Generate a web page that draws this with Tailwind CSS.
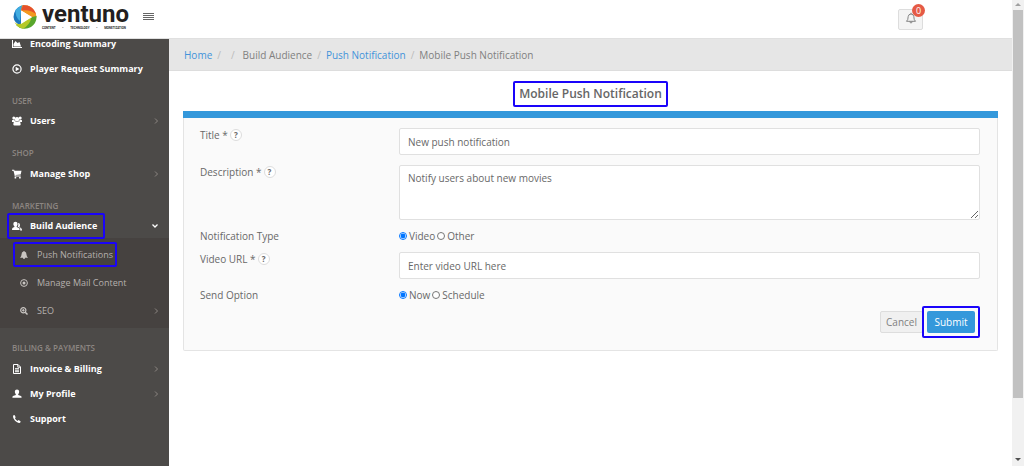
<!DOCTYPE html>
<html lang="en">
<head>
<meta charset="utf-8">
<meta name="viewport" content="width=device-width, initial-scale=1">
<title>Mobile Push Notification</title>
<script src="https://cdn.jsdelivr.net/npm/@tailwindcss/browser@4"></script>
</head>
<body class="flex h-screen overflow-hidden bg-white font-['Open_Sans','Noto_Sans',sans-serif] text-[10px] leading-4 text-[#686868]">
<div class="flex min-w-0 flex-1 flex-col">
  <header class="flex h-[39px] shrink-0 items-center border-b border-[#e0e0e0] bg-white pl-[13px]">
    <a href="#" aria-label="Ventuno" class="flex items-center gap-[5px] pb-[5px]">
      <svg class="size-6" viewBox="0 0 24 24">
        <path fill="#1c78bd" d="M8 5.500V20.500Q1 18 .5 12 .8 4 8 .8L12 0Q9 2 8 5.500Z"/>
        <path fill="#41ace0" d="M2.500 5Q5 1.500 9 .5L8 6 7 16Q2 12 2.500 5Z"/>
        <path fill="#f39a20" d="M9 .5Q16-1 20 4 23 7 23.500 12 21 15.500 18.500 12L8 5.500Z"/>
        <path fill="#e5512c" d="M10 .3Q17-.5 21 5L23 9Q17 4 8 5.500Z"/>
        <path fill="#58a62c" d="M23.500 11Q24 18 18 22 13 25 7 23L3 20Q12 20 19 12Z"/>
        <path fill="#b5c928" d="M1.500 17Q4 20 8 18.500L18.500 12Q17 20 10 23.700 4 22.500 1.500 17Z"/>
        <path fill="#fff" d="M8 5.500 19 12 8 19Z"/>
      </svg>
      <span class="flex w-[84px] flex-col font-['Roboto',sans-serif] text-[#231f20]">
        <span class="text-[24px] leading-[23px] font-bold">ventuno</span>
        <span class="flex justify-between text-[3px] leading-[4px] font-bold"><span>CONTENT</span><span>•</span><span>TECHNOLOGY</span><span>•</span><span>MONETIZATION</span></span>
      </span>
    </a>
    <button type="button" aria-label="Toggle menu" class="ml-[17px] flex w-[11px] flex-col gap-px pb-[5px]">
      <span class="h-px w-full bg-[#666]"></span><span class="h-px w-full bg-[#666]"></span><span class="h-px w-full bg-[#666]"></span><span class="h-px w-full bg-[#666]"></span>
    </button>
    <button type="button" aria-label="Notifications, 0 new" class="relative mr-[89px] ml-auto flex h-[21px] w-[25px] items-center justify-center rounded-xs border border-[#ddd] bg-[#f4f4f4]">
      <svg class="mb-[2px] size-3" viewBox="0 0 12 12" fill="none" stroke="#777" stroke-width=".9"><path d="M1.500 9.300Q3.200 8 3.200 4.500 3.400 2.200 6 2 8.600 2.200 8.800 4.500 8.800 8 10.500 9.300ZM6 2V.8M4.900 9.500Q5 11 6 11 7 11 7.100 9.500"/></svg>
      <span class="absolute -top-[6px] -right-[3px] size-[13px] rounded-full bg-[#e55a45] text-center text-[9px] leading-[13px] text-white">0</span>
    </button>
  </header>
  <div class="flex min-h-0 flex-1">
    <nav class="w-[169px] shrink-0 overflow-hidden bg-[#4c4a48] text-[9px] text-white">
      <div class="-mt-2 font-bold">
        <a href="#" class="flex h-[25px] items-center gap-2 pl-3">
          <svg class="size-[10px]" viewBox="0 0 10 10" fill="#fff"><path d="M0 1H1V8H10V9H0ZM1.500 7.500V5L3.500 2 5.500 4 7.500 3 9 7.500Z"/></svg>Encoding Summary</a>
        <a href="#" class="flex h-[25px] items-center gap-2 pl-3">
          <svg class="size-[10px]" viewBox="0 0 10 10"><circle cx="5" cy="5" r="4.100" fill="none" stroke="#fff" stroke-width="1.200"/><path fill="#fff" d="M3.700 2.700 7.400 5 3.700 7.300Z"/></svg>Player Request Summary</a>
        <h2 class="h-[27px] pt-3 pl-3 text-[8px] leading-[15px] font-semibold text-[#8c8682]">USER</h2>
        <a href="#" class="flex h-[25px] items-center gap-2 pr-[10px] pl-3">
          <svg class="size-[10px]" viewBox="0 0 10 10" fill="#fff"><circle cx="1.800" cy="2" r="1.500"/><circle cx="8.200" cy="2" r="1.500"/><circle cx="5" cy="3.300" r="2.200"/><path d="M0 6V4.300Q1 3.300 2.300 3.800L3 5.300 2 6ZM10 6V4.300Q9 3.300 7.700 3.800L7 5.300 8 6ZM1.300 8.500Q1.400 5.300 3.200 5.200L5 6 6.800 5.200Q8.600 5.300 8.700 8.500 8.500 9.500 7.500 9.500H2.500Q1.500 9.500 1.300 8.500Z"/></svg>
          <span class="flex-1">Users</span>
          <svg class="h-2 w-[5px]" viewBox="0 0 5 8" fill="none" stroke="#8c8682"><path d="M1 1.500 3.500 4 1 6.500"/></svg></a>
        <h2 class="h-7 pt-3 pl-3 text-[8px] leading-[15px] font-semibold text-[#8c8682]">SHOP</h2>
        <a href="#" class="flex h-[25px] items-center gap-2 pr-[10px] pl-3">
          <svg class="size-[10px]" viewBox="0 0 10 10" fill="#fff"><path d="M0 .8H2.200L2.500 1.800H9.500L8.700 5.500 3.500 6V6.600H8.700V7.500H2.600V6.200L1.500 1.700H0Z"/><circle cx="3.400" cy="8.700" r=".9"/><circle cx="7.900" cy="8.700" r=".9"/></svg>
          <span class="flex-1">Manage Shop</span>
          <svg class="h-2 w-[5px]" viewBox="0 0 5 8" fill="none" stroke="#8c8682"><path d="M1 1.500 3.500 4 1 6.500"/></svg></a>
        <h2 class="h-[27px] pt-3 pl-3 text-[8px] leading-[15px] font-semibold text-[#8c8682]">MARKETING</h2>
        <a href="#" class="relative flex h-[25px] items-center gap-2 pr-[10px] pl-3">
          <span class="absolute top-0 left-[7px] h-[26px] w-[98px] rounded-xs border-2 border-[#1a04fa]"></span>
          <svg class="size-[10px]" viewBox="0 0 10 10" fill="#fff"><path d="M1.300 3Q1.300.8 3.500.8 5.600.8 5.600 3 5.600 4.500 4.700 5.300V6L7.500 7.500V9H0Q0 7 .8 6.700L2.400 6V5.300Q1.300 4.500 1.300 3ZM6 2Q8 1.800 8 4 8 5.500 7.300 6L9 7Q10 7.500 10 9.500H8.200V7L5.700 5.700Q6.500 4.500 6.300 3Z"/></svg>
          <span class="flex-1">Build Audience</span>
          <svg class="h-[6px] w-2" viewBox="0 0 8 6" fill="none" stroke="#fff" stroke-width="1.300"><path d="M1.500 1.500 4 4 6.500 1.500"/></svg></a>
      </div>
      <div class="bg-[#464240] py-[3px] text-[#b5b0ad]">
        <a href="#" class="relative flex h-7 items-center gap-[9px] pl-5">
          <span class="absolute top-px left-[13px] h-[25px] w-[104px] rounded-xs border-2 border-[#1a04fa]"></span>
          <svg class="size-2" viewBox="0 0 8 8" fill="#c9c5c2"><path d="M4 0Q4.600 0 4.600.6 6.500 1 6.500 3.500 6.500 5.500 8 6.700H5Q5 8 4 8 3 8 3 6.700H0Q1.500 5.500 1.500 3.500 1.500 1 3.400.6 3.400 0 4 0Z"/></svg>Push Notifications</a>
        <a href="#" class="flex h-7 items-center gap-[9px] pl-5">
          <svg class="size-2" viewBox="0 0 8 8"><circle cx="4" cy="4" r="3.400" fill="none" stroke="#c9c5c2"/><circle cx="4" cy="4" r="1.500" fill="#c9c5c2"/></svg>Manage Mail Content</a>
        <a href="#" class="flex h-7 items-center gap-[9px] pr-[10px] pl-5">
          <svg class="size-2" viewBox="0 0 8 8" fill="none" stroke="#c9c5c2"><circle cx="3.300" cy="3.300" r="2.600" stroke-width="1.200"/><path d="M2 3.300H4.600M3.300 2V4.600"/><path stroke-width="1.500" d="M5.200 5.200 7.500 7.500"/></svg>
          <span class="flex-1">SEO</span>
          <svg class="h-2 w-[5px]" viewBox="0 0 5 8" fill="none" stroke="#8c8682"><path d="M1 1.500 3.500 4 1 6.500"/></svg></a>
      </div>
      <div class="font-bold">
        <h2 class="h-7 pt-3 pl-3 text-[8px] leading-[15px] font-semibold text-[#8c8682]">BILLING &amp; PAYMENTS</h2>
        <a href="#" class="flex h-[25px] items-center gap-2 pr-[10px] pl-3">
          <svg class="size-[10px]" viewBox="0 0 10 10" fill="none" stroke="#fff"><path d="M1.500.5H6L8.500 3V9.500H1.500ZM5.800.5V3.200H8.500M3 4.700H7M3 6.200H7M3 7.700H7"/></svg>
          <span class="flex-1">Invoice &amp; Billing</span>
          <svg class="h-2 w-[5px]" viewBox="0 0 5 8" fill="none" stroke="#8c8682"><path d="M1 1.500 3.500 4 1 6.500"/></svg></a>
        <a href="#" class="flex h-[25px] items-center gap-2 pr-[10px] pl-3">
          <svg class="size-[10px]" viewBox="0 0 10 10" fill="#fff"><path d="M2.800 2.800Q2.800.5 5 .5 7.200.5 7.200 2.800 7.200 4.300 6.200 5.200V5.900L9 7Q9.600 7.400 9.600 8.700H.4Q.4 7.400 1 7L3.800 5.900V5.200Q2.800 4.300 2.800 2.800Z"/></svg>
          <span class="flex-1">My Profile</span>
          <svg class="h-2 w-[5px]" viewBox="0 0 5 8" fill="none" stroke="#8c8682"><path d="M1 1.500 3.500 4 1 6.500"/></svg></a>
        <a href="#" class="flex h-[26px] items-center gap-2 pl-3">
          <svg class="size-[10px]" viewBox="0 0 10 10" fill="#fff"><path d="M1 2Q1.300 1 2.500 1L3.700 3.200 2.900 4.200Q3.800 6 5.500 6.900L6.500 6 8.600 7.200Q8.600 8.700 7.500 8.900 5.500 9.300 3 6.800.7 4.300 1 2Z"/></svg>Support</a>
      </div>
    </nav>
    <main class="min-w-0 flex-1">
      <nav aria-label="Breadcrumb" class="flex h-8 items-center border-b border-[#ddd] bg-[#e6e6e6] pl-[15px] whitespace-nowrap text-[#808080]">
        <a href="#" class="text-[#4393da]">Home</a><span class="mx-[5px] text-[#bbb]">/</span><span class="mr-2 ml-[5px] text-[#bbb]">/</span><span>Build Audience</span><span class="mx-[5px] text-[#bbb]">/</span><a href="#" class="text-[#4393da]">Push Notification</a><span class="mx-[5px] text-[#bbb]">/</span><span>Mobile Push Notification</span>
      </nav>
      <div class="px-[14px] pt-[10px]">
        <h1 class="mx-auto w-fit rounded-xs border-2 border-[#1a04fa] px-1 text-[12px] leading-[22px] font-semibold text-[#666]">Mobile Push Notification</h1>
        <form class="mt-1 rounded-b-xs border-x border-b border-[#e4e4e4] bg-[#fafafa]">
          <div class="-mx-px h-[7px] bg-[#3498db]"></div>
          <div class="pt-[10px] pr-[17px] pb-3 pl-4">
            <div class="flex">
              <div class="flex h-[14px] w-[199px] shrink-0 items-center gap-[2px]"><label for="title">Title *</label><button type="button" aria-label="Help on title" class="size-3 rounded-full border border-[#ddd] bg-white text-[8px] leading-[10px] font-bold">?</button></div>
              <input id="title" type="text" value="New push notification" class="h-[27px] min-w-0 flex-1 rounded-xs border border-[#e0e0e0] bg-white px-2 outline-none">
            </div>
            <div class="mt-[10px] flex">
              <div class="flex h-[14px] w-[199px] shrink-0 items-center gap-[2px]"><label for="description">Description *</label><button type="button" aria-label="Help on description" class="size-3 rounded-full border border-[#ddd] bg-white text-[8px] leading-[10px] font-bold">?</button></div>
              <textarea id="description" class="h-[55px] min-w-0 flex-1 resize-y rounded-xs border border-[#e0e0e0] bg-white px-2 py-1 outline-none">Notify users about new movies</textarea>
            </div>
            <div class="mt-2 flex" role="radiogroup" aria-labelledby="ntype">
              <span id="ntype" class="w-[199px] shrink-0">Notification Type</span>
              <label class="flex items-center gap-[2px]"><input type="radio" name="type" checked class="size-2 accent-[#0075ff]">Video</label>
              <label class="ml-[2px] flex items-center gap-[2px]"><input type="radio" name="type" class="size-2 accent-[#0075ff]">Other</label>
            </div>
            <div class="mt-2 flex">
              <div class="flex h-[14px] w-[199px] shrink-0 items-center gap-[2px]"><label for="url">Video URL *</label><button type="button" aria-label="Help on video URL" class="size-3 rounded-full border border-[#ddd] bg-white text-[8px] leading-[10px] font-bold">?</button></div>
              <input id="url" type="text" placeholder="Enter video URL here" class="h-[27px] min-w-0 flex-1 rounded-xs border border-[#e0e0e0] bg-white px-2 outline-none placeholder:text-[#686868]">
            </div>
            <div class="mt-2 flex" role="radiogroup" aria-labelledby="sopt">
              <span id="sopt" class="w-[199px] shrink-0">Send Option</span>
              <label class="flex items-center gap-[2px]"><input type="radio" name="send" checked class="size-2 accent-[#0075ff]">Now</label>
              <label class="ml-[2px] flex items-center gap-[2px]"><input type="radio" name="send" class="size-2 accent-[#0075ff]">Schedule</label>
            </div>
            <div class="mt-[3px] flex items-center justify-end">
              <button type="button" class="h-[22px] w-[43px] rounded-xs border border-[#ddd] bg-[#f0f0f0] text-[#808080]">Cancel</button>
              <span class="-ml-px rounded-xs border-2 border-[#1a04fa] bg-[#fafafa] p-[3px]"><button type="submit" class="block h-[22px] w-12 rounded-xs bg-[#3498db] text-white">Submit</button></span>
            </div>
          </div>
        </form>
      </div>
    </main>
  </div>
</div>
<div aria-hidden="true" class="flex w-3 shrink-0 flex-col items-center bg-[#f1f1f1]">
  <svg class="h-[10px] w-[6px] shrink-0" viewBox="0 0 6 10" fill="#a0a0a0"><path d="M0 6 3 3 6 6Z"/></svg>
  <div class="w-[10px] basis-[388px] bg-[#c1c1c1]"></div>
  <div class="flex-1"></div>
  <svg class="mb-px h-[10px] w-[6px] shrink-0" viewBox="0 0 6 10" fill="#505050"><path d="M0 3 3 6 6 3Z"/></svg>
</div>
</body>
</html>
